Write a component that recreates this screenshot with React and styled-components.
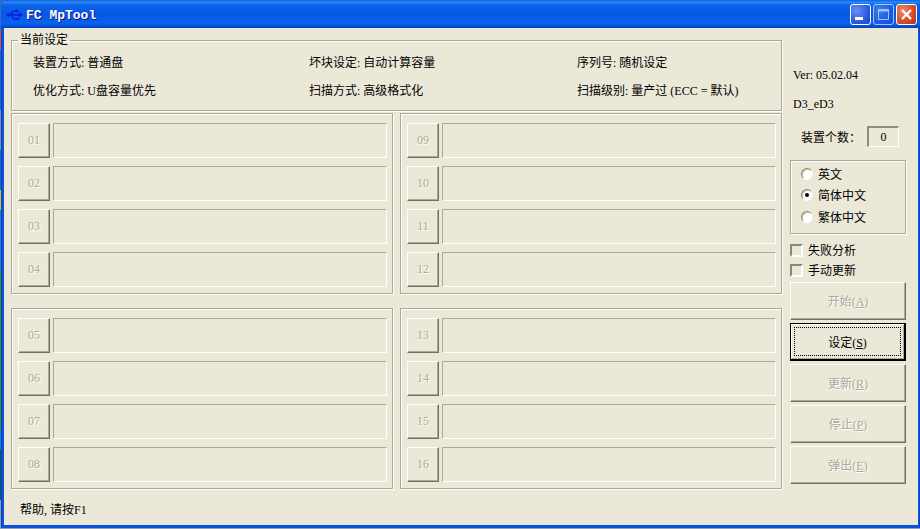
import React from "react";
import styled, { createGlobalStyle } from "styled-components";

const FACE = "#ebe8d8";
const FONT = `"Liberation Serif", "Noto Sans CJK SC", serif`;

const GlobalStyle = createGlobalStyle`
  html, body {
    margin: 0;
    padding: 0;
    overflow: hidden;
  }
  body {
    font-family: ${FONT};
    font-size: 12px;
    color: #000;
  }
  * {
    box-sizing: border-box;
  }
`;

const Desktop = styled.div`
  width: 920px;
  height: 529px;
  padding-left: 1px;
  background: linear-gradient(
    180deg,
    #2a6fd0 0 30px,
    #d8553a 30px 50px,
    #2a62c0 50px 110px,
    #8a90a0 110px 150px,
    #2a62c0 150px 190px,
    #e0c020 190px 210px,
    #3a70c8 210px 270px,
    #4a8a20 270px 330px,
    #4a8a20 330px 430px,
    #1a78e0 430px 450px,
    #1e5a30 450px 500px,
    #90a0b0 500px 529px
  );
`;

const Window = styled.div`
  width: 919px;
  height: 528px;
  display: flex;
  flex-direction: column;
  border-radius: 7px 7px 0 0;
  overflow: hidden;
  background: #0855dd;
  box-shadow: inset 1px 0 0 #0a3fd0, inset -1px 0 0 #0a3fd0;
`;

const TitleBar = styled.div`
  height: 28px;
  flex: none;
  display: flex;
  align-items: center;
  padding: 1px 3px 0 5px;
  background: linear-gradient(
    180deg,
    #0a5ae0 0,
    #2f8cf8 2px,
    #0a64ec 5px,
    #0558e4 14px,
    #0a62ee 23px,
    #0650d8 26px,
    #0340c0 28px
  );
`;

const TitleText = styled.span`
  margin: 2px 0 0 3px;
  font-family: "Liberation Mono", monospace;
  font-size: 13px;
  font-weight: 700;
  color: #fff;
  text-shadow: 1px 1px 0 #0f1089;
`;

const Controls = styled.div`
  margin-left: auto;
  display: flex;
  gap: 2px;
`;

const ControlButton = styled.div`
  width: 21px;
  height: 21px;
  display: flex;
  align-items: center;
  justify-content: center;
  border: 1px solid #fff;
  border-radius: 3px;
  background: ${(p) =>
    p.$kind === "close"
      ? "radial-gradient(circle at 30% 30%, #e88a68, #d6492a 60%, #b8301a)"
      : "radial-gradient(circle at 30% 30%, #6a92f0, #2a5ce0 60%, #1a44c0)"};
  opacity: ${(p) => (p.$kind === "max" ? 0.62 : 1)};
`;

const Body = styled.div`
  flex: 1;
  margin: 0 2px 3px 3px;
  display: flex;
  background: ${FACE};
`;

const Main = styled.div`
  width: 778px;
  flex: none;
  padding: 5px 0 0 7px;
  display: flex;
  flex-direction: column;
`;

const Settings = styled.fieldset`
  width: 771px;
  height: 78px;
  margin: 0;
  padding: 9px 0 0 21px;
  border: 1px solid #aca899;
  box-shadow: inset 1px 1px 0 #fff, 1px 1px 0 #fff;
`;

const Legend = styled.legend`
  margin-left: -15px;
  padding: 0 2px;
  line-height: 14px;
  font-size: 12px;
`;

const SettingsGrid = styled.div`
  display: grid;
  grid-template-columns: 276px 268px 1fr;
  row-gap: 14px;
  line-height: 14px;
`;

const Groups = styled.div`
  margin-top: 2px;
  display: grid;
  grid-template-columns: 382px 382px;
  column-gap: 7px;
  row-gap: 14px;
`;

const Group = styled.div`
  padding: 9px 5px 6px 6px;
  border: 1px solid #aca899;
  box-shadow: inset 1px 1px 0 #fff, 1px 1px 0 #fff;
  display: flex;
  flex-direction: column;
  gap: 8px;
`;

const Row = styled.div`
  height: 35px;
  display: flex;
  gap: 3px;
`;

const SlotButton = styled.div`
  width: 32px;
  display: flex;
  align-items: center;
  justify-content: center;
  font-size: 12px;
  color: #aca899;
  text-shadow: 1px 1px 0 #fff;
  border-top: 1px solid #fff;
  border-left: 1px solid #fff;
  border-right: 1px solid #716f64;
  border-bottom: 1px solid #716f64;
  box-shadow: inset -1px -1px 0 #aca899;
`;

const SlotField = styled.div`
  flex: 1;
  border-top: 1px solid #aca899;
  border-left: 1px solid #aca899;
  border-bottom: 1px solid #fff;
  border-right: 1px solid #fff;
`;

const Status = styled.div`
  margin-top: 14px;
  padding-left: 9px;
  line-height: 14px;
`;

const Side = styled.div`
  width: 116px;
  flex: none;
  margin-left: 8px;
  padding-top: 40px;
  display: flex;
  flex-direction: column;
`;

const InfoLine = styled.div`
  padding-left: 3px;
  line-height: 14px;
  margin-bottom: ${(p) => p.$gap}px;
`;

const CountRow = styled.div`
  height: 21px;
  padding-left: 11px;
  display: flex;
  align-items: center;
`;

const CountBox = styled.div`
  width: 32px;
  height: 21px;
  margin-left: auto;
  margin-right: 7px;
  display: flex;
  align-items: center;
  justify-content: center;
  border-top: 2px solid #8f8c7c;
  border-left: 2px solid #8f8c7c;
  border-right: 1px solid #fff;
  border-bottom: 1px solid #fff;
`;

const LanguageBox = styled.div`
  height: 74px;
  margin-top: 13px;
  padding: 2px 0 0 10px;
  border: 1px solid #aca899;
  box-shadow: inset 1px 1px 0 #fff, 1px 1px 0 #fff;
  display: flex;
  flex-direction: column;
`;

const RadioRow = styled.div`
  height: 21.5px;
  display: flex;
  align-items: center;
  gap: 5px;
`;

const RadioDot = styled.span`
  width: 12px;
  height: 12px;
  flex: none;
  border-radius: 50%;
  background: #fff;
  border: 1px solid;
  border-color: #8a8778 #f4f2e8 #fff #8a8778;
  box-shadow: inset 1px 1px 0 #c8c5b4;
  display: flex;
  align-items: center;
  justify-content: center;

  &::after {
    content: "";
    width: 4px;
    height: 4px;
    border-radius: 50%;
    background: ${(p) => (p.$checked ? "#000" : "transparent")};
  }
`;

const Checks = styled.div`
  margin-top: 9px;
  display: flex;
  flex-direction: column;
  gap: 6px;
`;

const CheckRow = styled.div`
  height: 14px;
  display: flex;
  align-items: center;
  gap: 5px;
`;

const CheckMark = styled.span`
  width: 13px;
  height: 13px;
  flex: none;
  background: ${FACE};
  border: 2px solid;
  border-color: #8a8778 #fff #fff #8a8778;
`;

const Buttons = styled.div`
  margin-top: 5px;
  display: flex;
  flex-direction: column;
  gap: 3px;
`;

const ActionButton = styled.div`
  position: relative;
  height: 38px;
  display: flex;
  align-items: center;
  justify-content: center;
  border-top: 1px solid #fff;
  border-left: 1px solid #fff;
  border-right: 1px solid #716f64;
  border-bottom: 1px solid #716f64;
  box-shadow: inset -1px -1px 0 #aca899;
  color: #aca899;
  text-shadow: 1px 1px 0 #fff;

  ${(p) =>
    p.$default &&
    `
    border: 1px solid #000;
    border-right-width: 2px;
    border-bottom-width: 2px;
    color: #000;
    text-shadow: none;
    box-shadow: inset 1px 1px 0 #fff, inset -1px -1px 0 #aca899;

    &::after {
      content: "";
      position: absolute;
      inset: 3px;
      border: 1px dotted #000;
    }
  `}
`;

const slots = [
  ["01", "02", "03", "04"],
  ["09", "10", "11", "12"],
  ["05", "06", "07", "08"],
  ["13", "14", "15", "16"],
];

const actions = [
  ["开始", "A"],
  ["设定", "S", true],
  ["更新", "R"],
  ["停止", "P"],
  ["弹出", "E"],
];

function UsbIcon() {
  return (
    <svg width="17" height="12" viewBox="0 0 17 12">
      <g fill="none" stroke="#0a1ee0" strokeWidth="1.4">
        <path d="M1 6H16" />
        <path d="M4 6L7.5 2H10" />
        <path d="M5 6L8 10H11" />
      </g>
      <path d="M0 6L3 3.5V8.5Z" fill="#0a1ee0" />
      <path d="M13 3.5L17 6L13 8.5Z" fill="#0a1ee0" />
      <rect x="10" y="0.8" width="2.4" height="2.4" fill="#0a1ee0" />
      <circle cx="12" cy="10" r="1.4" fill="#0a1ee0" />
    </svg>
  );
}

export default function App() {
  return (
    <Desktop>
      <GlobalStyle />
      <Window>
        <TitleBar>
          <UsbIcon />
          <TitleText>FC MpTool</TitleText>
          <Controls>
            <ControlButton>
              <svg width="19" height="19" viewBox="0 0 19 19">
                <rect x="4" y="12" width="8" height="3" fill="#fff" />
              </svg>
            </ControlButton>
            <ControlButton $kind="max">
              <svg width="19" height="19" viewBox="0 0 19 19">
                <path d="M4.5 4.5H14.5V14.5H4.5Z" fill="none" stroke="#fff" />
                <rect x="4" y="4" width="11" height="2.5" fill="#fff" />
              </svg>
            </ControlButton>
            <ControlButton $kind="close">
              <svg width="19" height="19" viewBox="0 0 19 19">
                <path d="M5 5L14 14M14 5L5 14" stroke="#fff" strokeWidth="2.4" />
              </svg>
            </ControlButton>
          </Controls>
        </TitleBar>
        <Body>
          <Main>
            <Settings>
              <Legend>当前设定</Legend>
              <SettingsGrid>
                <span>装置方式: 普通盘</span>
                <span>坏块设定: 自动计算容量</span>
                <span>序列号: 随机设定</span>
                <span>优化方式: U盘容量优先</span>
                <span>扫描方式: 高级格式化</span>
                <span>扫描级别: 量产过 (ECC = 默认)</span>
              </SettingsGrid>
            </Settings>
            <Groups>
              {slots.map((group) => (
                <Group key={group[0]}>
                  {group.map((n) => (
                    <Row key={n}>
                      <SlotButton>{n}</SlotButton>
                      <SlotField />
                    </Row>
                  ))}
                </Group>
              ))}
            </Groups>
            <Status>帮助, 请按F1</Status>
          </Main>
          <Side>
            <InfoLine $gap={15}>Ver: 05.02.04</InfoLine>
            <InfoLine $gap={15}>D3_eD3</InfoLine>
            <CountRow>
              <span>装置个数：</span>
              <CountBox>0</CountBox>
            </CountRow>
            <LanguageBox>
              <RadioRow>
                <RadioDot />
                英文
              </RadioRow>
              <RadioRow>
                <RadioDot $checked />
                简体中文
              </RadioRow>
              <RadioRow>
                <RadioDot />
                繁体中文
              </RadioRow>
            </LanguageBox>
            <Checks>
              <CheckRow>
                <CheckMark />
                失败分析
              </CheckRow>
              <CheckRow>
                <CheckMark />
                手动更新
              </CheckRow>
            </Checks>
            <Buttons>
              {actions.map(([label, key, isDefault]) => (
                <ActionButton key={key} $default={isDefault}>
                  <span>
                    {label}(<u>{key}</u>)
                  </span>
                </ActionButton>
              ))}
            </Buttons>
          </Side>
        </Body>
      </Window>
    </Desktop>
  );
}
